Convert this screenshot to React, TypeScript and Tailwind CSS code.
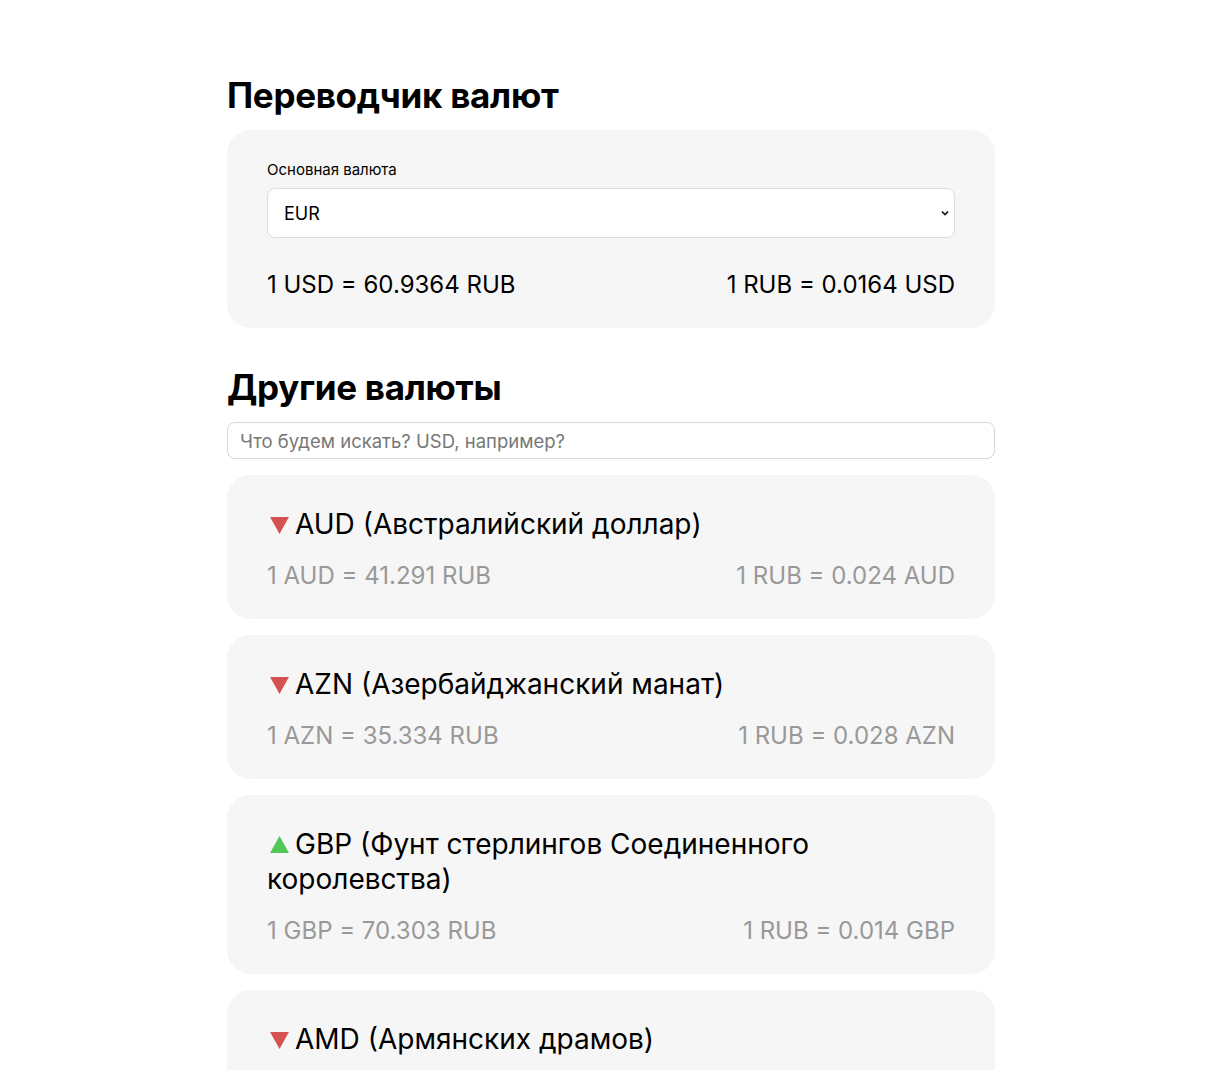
import React from "react";

type Rate = {
  code: string;
  name: string;
  up: boolean;
  toRub: string;
  fromRub: string;
};

const rates: Rate[] = [
  { code: "AUD", name: "Австралийский доллар", up: false, toRub: "41.291", fromRub: "0.024" },
  { code: "AZN", name: "Азербайджанский манат", up: false, toRub: "35.334", fromRub: "0.028" },
  { code: "GBP", name: "Фунт стерлингов Соединенного королевства", up: true, toRub: "70.303", fromRub: "0.014" },
  { code: "AMD", name: "Армянских драмов", up: false, toRub: "0.156", fromRub: "6.410" },
];

const Arrow = ({ up }: { up: boolean }) =>
  up ? (
    <svg width="21" height="19" viewBox="0 0 20 18" className="inline-block ml-[2px] mr-[5px] align-[0px]">
      <path d="M10 1 L19 17 L1 17 Z" fill="#4fc858" />
    </svg>
  ) : (
    <svg width="21" height="19" viewBox="0 0 20 18" className="inline-block ml-[2px] mr-[5px] align-[-1px]">
      <path d="M1 1 L19 1 L10 17 Z" fill="#d65252" />
    </svg>
  );

const App = () => {
  return (
    <div className="h-[1070px] overflow-hidden bg-white font-['Inter',sans-serif] text-black">
      <div className="w-[768px] ml-[227px] pt-[73px] pb-10">
        <h1 className="text-[35px] leading-[44px] font-bold mb-[13px] tracking-[-0.3px]">
          Переводчик валют
        </h1>
        <div className="bg-[#f6f6f6] rounded-[24px] px-10 pt-[31px] pb-[28px]">
          <div className="text-[15px] leading-[18px] mb-[9px]">Основная валюта</div>
          <div className="relative">
            <select className="appearance-none w-full h-[50px] bg-white border border-[#dcdcdc] rounded-[8px] px-4 text-[18px] outline-none">
              <option>EUR</option>
            </select>
            <svg
              width="10"
              height="10"
              viewBox="0 0 10 10"
              className="absolute right-[5px] top-[20px]"
            >
              <path d="M2 3.5 L5 6.5 L8 3.5" fill="none" stroke="#111" strokeWidth="1.6" />
            </svg>
          </div>
          <div className="flex justify-between text-[24px] leading-[30px] mt-[32px]">
            <span>1 USD = 60.9364 RUB</span>
            <span>1 RUB = 0.0164 USD</span>
          </div>
        </div>

        <h2 className="text-[35px] leading-[44px] font-bold mt-[37px] mb-[13px] tracking-[-0.3px]">
          Другие валюты
        </h2>
        <input
          className="w-full h-[37px] border border-[#d6d6d6] rounded-[8px] px-3 text-[18.5px] outline-none placeholder:text-[#777]"
          placeholder="Что будем искать? USD, например?"
        />
        <div className="flex flex-col gap-4 mt-4">
          {rates.map((r) => (
            <div key={r.code} className="bg-[#f6f6f6] rounded-[24px] px-10 pt-[32px] pb-[28px]">
              <div className="text-[28px] leading-[35px] pr-[140px]">
                <Arrow up={r.up} />
                {r.code} ({r.name})
              </div>
              <div className="flex justify-between text-[24px] leading-[30px] mt-[19px] text-[#999]">
                <span>
                  1 {r.code} = {r.toRub} RUB
                </span>
                <span>
                  1 RUB = {r.fromRub} {r.code}
                </span>
              </div>
            </div>
          ))}
        </div>
      </div>
    </div>
  );
};

export default App;
